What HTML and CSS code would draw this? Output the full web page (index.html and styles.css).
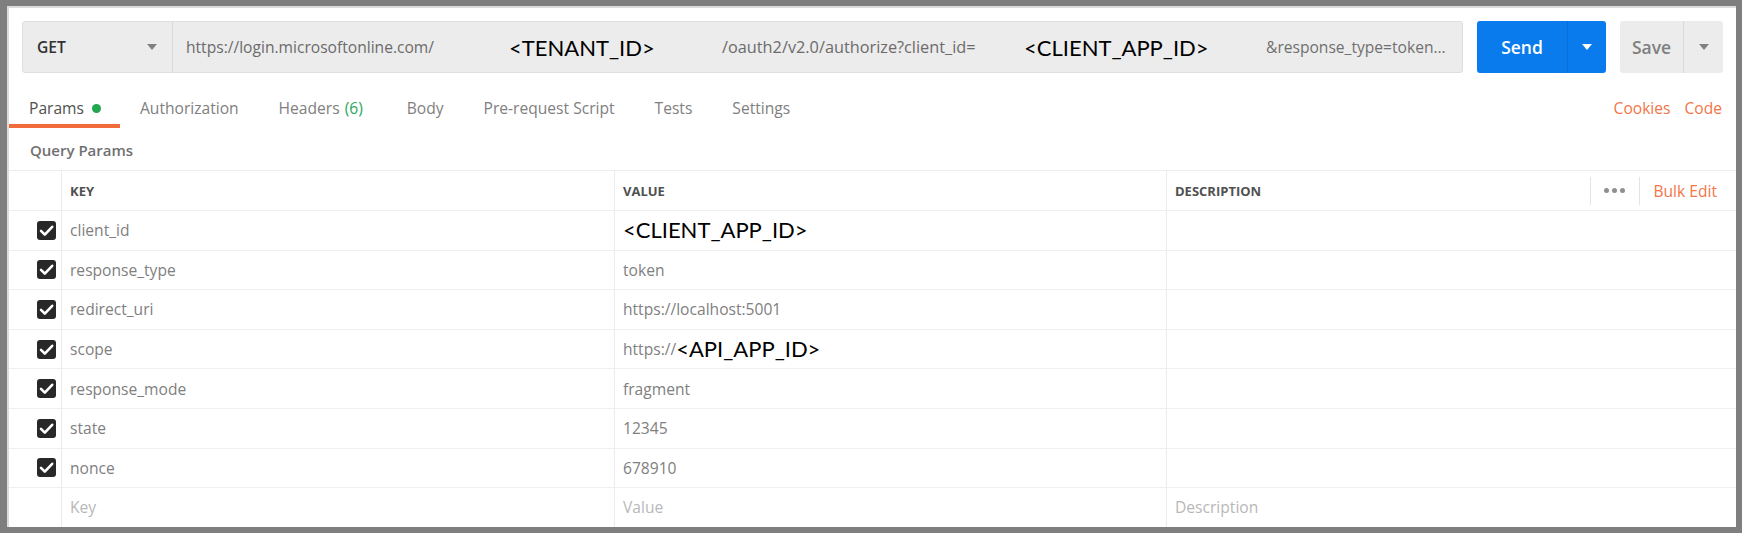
FILE: index.html
```html
<!DOCTYPE html>
<html>
<head>
<meta charset="utf-8">
<link rel="stylesheet" href="styles.css">
</head>
<body>
<div class="frame">
  <div class="urlbar">
    <div class="url-input">
      <div class="method"><span class="method-name">GET</span><span class="caret caret-grey"></span></div>
      <div class="url-text">
        <span class="url-part">https://login.microsoftonline.com/</span>
        <span class="redact r-tenant">&lt;TENANT_ID&gt;</span>
        <span class="url-part url-mid">/oauth2/v2.0/authorize?client_id=</span>
        <span class="redact r-client">&lt;CLIENT_APP_ID&gt;</span>
        <span class="url-tail">&amp;response_type=token&amp;redirect_uri=https://localhost:5001&amp;scope=</span>
      </div>
    </div>
    <div class="btn send">
      <span class="btn-label send-label">Send</span>
      <span class="btn-drop send-drop"><span class="caret caret-white"></span></span>
    </div>
    <div class="btn save">
      <span class="btn-label save-label">Save</span>
      <span class="btn-drop save-drop"><span class="caret caret-grey"></span></span>
    </div>
  </div>

  <div class="tabs">
    <div class="tab active">Params<span class="dot"></span></div>
    <div class="tab">Authorization</div>
    <div class="tab tab-headers">Headers <span class="count">(6)</span></div>
    <div class="tab">Body</div>
    <div class="tab">Pre-request Script</div>
    <div class="tab">Tests</div>
    <div class="tab">Settings</div>
    <div class="tab-links">
      <span class="link">Cookies</span>
      <span class="link">Code</span>
    </div>
  </div>

  <div class="section-title">Query Params</div>

  <div class="params">
    <div class="row head">
      <div class="cell chk"></div>
      <div class="cell col">KEY</div>
      <div class="cell col">VALUE</div>
      <div class="cell col desc-head">
        <span>DESCRIPTION</span>
        <div class="tools">
          <span class="sep"></span>
          <span class="dots"><i></i><i></i><i></i></span>
          <span class="sep"></span>
          <span class="link">Bulk Edit</span>
        </div>
      </div>
    </div>

    <div class="row">
      <div class="cell chk"><svg class="cb" viewBox="0 0 19 19"><rect width="19" height="19" rx="3"/><path d="M4 9.8 L7.8 13.6 L15.2 5.8"/></svg></div>
      <div class="cell col">client_id</div>
      <div class="cell col"><span class="redact-cell">&lt;CLIENT_APP_ID&gt;</span></div>
      <div class="cell col"></div>
    </div>
    <div class="row">
      <div class="cell chk"><svg class="cb" viewBox="0 0 19 19"><rect width="19" height="19" rx="3"/><path d="M4 9.8 L7.8 13.6 L15.2 5.8"/></svg></div>
      <div class="cell col">response_type</div>
      <div class="cell col">token</div>
      <div class="cell col"></div>
    </div>
    <div class="row">
      <div class="cell chk"><svg class="cb" viewBox="0 0 19 19"><rect width="19" height="19" rx="3"/><path d="M4 9.8 L7.8 13.6 L15.2 5.8"/></svg></div>
      <div class="cell col">redirect_uri</div>
      <div class="cell col">https://localhost:5001</div>
      <div class="cell col"></div>
    </div>
    <div class="row">
      <div class="cell chk"><svg class="cb" viewBox="0 0 19 19"><rect width="19" height="19" rx="3"/><path d="M4 9.8 L7.8 13.6 L15.2 5.8"/></svg></div>
      <div class="cell col">scope</div>
      <div class="cell col">https://<span class="redact-cell">&lt;API_APP_ID&gt;</span></div>
      <div class="cell col"></div>
    </div>
    <div class="row">
      <div class="cell chk"><svg class="cb" viewBox="0 0 19 19"><rect width="19" height="19" rx="3"/><path d="M4 9.8 L7.8 13.6 L15.2 5.8"/></svg></div>
      <div class="cell col">response_mode</div>
      <div class="cell col">fragment</div>
      <div class="cell col"></div>
    </div>
    <div class="row">
      <div class="cell chk"><svg class="cb" viewBox="0 0 19 19"><rect width="19" height="19" rx="3"/><path d="M4 9.8 L7.8 13.6 L15.2 5.8"/></svg></div>
      <div class="cell col">state</div>
      <div class="cell col">12345</div>
      <div class="cell col"></div>
    </div>
    <div class="row">
      <div class="cell chk"><svg class="cb" viewBox="0 0 19 19"><rect width="19" height="19" rx="3"/><path d="M4 9.8 L7.8 13.6 L15.2 5.8"/></svg></div>
      <div class="cell col">nonce</div>
      <div class="cell col">678910</div>
      <div class="cell col"></div>
    </div>
    <div class="row">
      <div class="cell chk"></div>
      <div class="cell col ph">Key</div>
      <div class="cell col ph">Value</div>
      <div class="cell col ph">Description</div>
    </div>
  </div>
</div>
</body>
</html>
```

FILE: styles.css
```css
html, body {
  margin: 0;
  padding: 0;
}
body {
  background: #7f7f7f;
  font-family: "Open Sans", "Noto Sans", sans-serif;
  height: 533px;
  overflow: hidden;
}
.frame {
  margin: 6px 6px 6px 7px;
  height: 521px;
  box-sizing: border-box;
  background: #fff;
  border-top: 2px solid #dcdcdc;
  border-left: 2px solid #dcdcdc;
  overflow: hidden;
}

/* URL bar */
.urlbar {
  display: flex;
  gap: 14px;
  padding: 13px 13px 0 13px;
  height: 52px;
}
.url-input {
  flex: 1;
  min-width: 0;
  display: flex;
  background: #ececec;
  border: 1px solid #dedede;
  border-radius: 3px;
  box-sizing: border-box;
}
.method {
  width: 150px;
  flex: none;
  box-sizing: border-box;
  display: flex;
  align-items: center;
  justify-content: space-between;
  padding: 0 15px 0 14px;
  border-right: 1px solid #d9d9d9;
}
.method-name {
  font-size: 15.6px;
  font-weight: 600;
  color: #333;
}
.caret {
  width: 0;
  height: 0;
  border-left: 5px solid transparent;
  border-right: 5px solid transparent;
  border-top: 6px solid #808080;
}
.caret-white {
  border-top-color: #fff;
}
.url-text {
  flex: 1;
  min-width: 0;
  display: flex;
  align-items: center;
  padding: 0 13px;
  font-size: 15.6px;
  color: #6b6b6b;
  white-space: nowrap;
  overflow: hidden;
}
.url-part {
  flex: none;
}
.url-mid {
  width: 258px;
  font-size: 16.3px;
}
.redact {
  flex: none;
  box-sizing: border-box;
  font-family: "Lato", "Open Sans", sans-serif;
  font-size: 22px;
  color: #000;
}
.r-tenant {
  width: 288px;
  padding-left: 75px;
}
.r-client {
  width: 286px;
  padding-left: 44px;
}
.url-tail {
  flex: 1;
  min-width: 0;
  overflow: hidden;
  text-overflow: ellipsis;
  color: #707070;
}

/* Buttons */
.btn {
  display: flex;
  border-radius: 3px;
  flex: none;
  overflow: hidden;
}
.send {
  width: 129px;
  background: #097bed;
}
.save {
  width: 103px;
  background: #ececec;
}
.btn-label {
  display: flex;
  align-items: center;
  justify-content: center;
  font-size: 17.5px;
  font-weight: 600;
}
.send-label {
  width: 90px;
  color: #fff;
}
.save-label {
  width: 63px;
  color: #808080;
}
.btn-drop {
  flex: 1;
  display: flex;
  align-items: center;
  justify-content: center;
}
.send-drop {
  border-left: 1px solid #0a6ed3;
}
.save-drop {
  border-left: 1px solid #dadada;
}

/* Tabs */
.tabs {
  display: flex;
  height: 55px;
}
.tab {
  padding: 25px 20px 6px 20px;
  line-height: 20px;
  font-size: 15.6px;
  color: #808080;
  border-bottom: 4px solid transparent;
  display: flex;
  align-items: center;
  white-space: nowrap;
}
.tab.active {
  color: #505050;
  border-bottom-color: #f26b3a;
  padding-right: 19px;
}
.tab-headers {
  padding-right: 24px;
}
.dot {
  width: 9px;
  height: 9px;
  border-radius: 50%;
  background: #22a650;
  margin-left: 8px;
}
.count {
  color: #2aa85a;
  margin-left: 5px;
}
.tab-links {
  margin-left: auto;
  display: flex;
  gap: 14px;
  padding: 25px 14px 0 0;
  line-height: 20px;
  font-size: 15.6px;
}
.link {
  color: #f47548;
  white-space: nowrap;
}

/* Section title */
.section-title {
  padding: 12px 0 10px 21px;
  line-height: 20px;
  font-size: 15px;
  font-weight: 600;
  color: #707070;
}

/* Params table */
.params {
  border-top: 1px solid #ececec;
}
.row {
  display: grid;
  grid-template-columns: 52px 553px 552px 1fr;
  height: 39.6px;
  box-sizing: border-box;
  border-top: 1px solid #efefef;
}
.row.head {
  height: 39px;
  border-top: none;
}
.cell {
  display: flex;
  align-items: center;
  overflow: hidden;
  white-space: nowrap;
  font-size: 15.6px;
  color: #808080;
  box-sizing: border-box;
}
.col {
  border-left: 1px solid #ececec;
  padding-left: 8px;
}
.head .cell {
  font-size: 13px;
  font-weight: 700;
  color: #505050;
}
.chk {
  justify-content: flex-end;
  padding-right: 5px;
}
.cb {
  width: 19px;
  height: 19px;
  display: block;
}
.cb rect {
  fill: #282828;
}
.cb path {
  fill: none;
  stroke: #fff;
  stroke-width: 2.6;
  stroke-linecap: round;
  stroke-linejoin: round;
}
.redact-cell {
  font-family: "Lato", "Open Sans", sans-serif;
  font-size: 22px;
  color: #000;
  line-height: 24px;
}
.ph {
  color: #b8b8b8;
}
.desc-head {
  justify-content: space-between;
}
.tools {
  display: flex;
  align-items: center;
  padding-right: 19px;
}
.head .tools .link {
  font-size: 15.6px;
  font-weight: 400;
  color: #f47548;
}
.sep {
  width: 1px;
  height: 28px;
  background: #e4e4e4;
}
.dots {
  display: flex;
  gap: 3px;
  margin: 0 14px 0 13px;
}
.dots i {
  width: 5px;
  height: 5px;
  border-radius: 50%;
  background: #8f8f8f;
}
.tools .sep + .dots + .sep {
  margin-right: 13px;
}
```
